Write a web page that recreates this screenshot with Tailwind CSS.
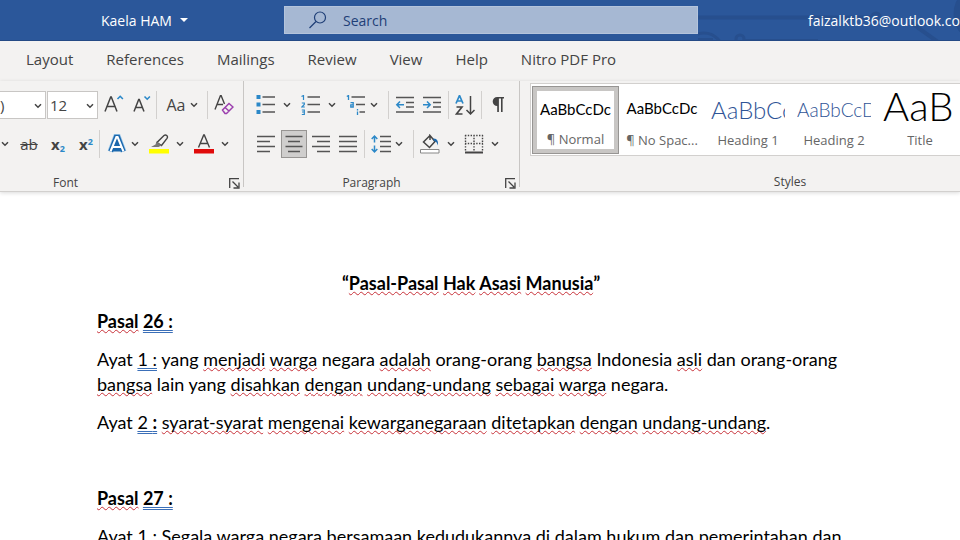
<!doctype html>
<html lang="en">
  <head>
    <meta charset="UTF-8" />
    <meta name="viewport" content="width=device-width, initial-scale=1.0" />
    <script src="https://cdn.jsdelivr.net/npm/@tailwindcss/browser@4"></script>
    <title>Kaela HAM - Word</title>
  </head>
  <body
    class="h-screen flex flex-col overflow-hidden bg-white font-['Open_Sans','Noto_Sans',sans-serif] text-[#444444]"
  >
    <!-- Shared icon parts -->
    <svg class="hidden">
      <symbol id="chevron" viewBox="0 0 8 6">
        <path d="M1 1.2 4 4.2 7 1.2" fill="none" stroke="#444" stroke-width="1.5" />
      </symbol>
      <symbol id="launcher" viewBox="0 0 11 11">
        <path d="M.7 10V.7H10M3.5 3.5l5.5 5.5M10 4.5V10H4.5" fill="none" stroke="#444" stroke-width="1.3" />
      </symbol>
    </svg>

    <!-- Title bar -->
    <header
      class="relative flex items-center shrink-0 h-[41px] bg-[#2b579a] border-b border-[#244a85] text-white text-[14px] whitespace-nowrap overflow-hidden"
    >
      <svg class="absolute right-0 top-0 w-[262px] h-[41px]" viewBox="0 0 262 41" fill="none" stroke="#274f8e">
        <path d="M0 17.5h174" stroke-width="4" />
        <circle cx="178" cy="17" r="4" stroke-width="3" />
        <path d="M212 22l28 20" stroke-width="4" />
        <circle cx="6" cy="52" r="19" stroke-width="3" />
        <path d="M-4 39.5h19" stroke-width="3" />
        <circle cx="42" cy="39" r="4" stroke-width="3" />
        <path d="M46 40h74" stroke-width="2" />
        <circle cx="286" cy="14" r="30" fill="#274f8e" />
      </svg>
      <div class="w-[284px] shrink-0 pl-[101px]">
        <button class="flex items-center gap-2">
          Kaela HAM
          <svg class="w-2 h-1" viewBox="0 0 8 4"><path d="M0 0h8L4 4z" fill="#fff" /></svg>
        </button>
      </div>
      <label
        class="relative flex-1 flex items-center h-7 pl-6 bg-[#a6b8d3] border border-[#b4c4dc]"
      >
        <svg class="w-[18px] h-[18px] shrink-0" viewBox="0 0 18 18" fill="none" stroke="#1f3f77" stroke-width="1.2">
          <circle cx="11" cy="6.5" r="5.5" />
          <path d="M7 10.5 .5 17" />
        </svg>
        <input
          type="text"
          aria-label="Search"
          placeholder="Search"
          class="flex-1 min-w-0 pl-4 bg-transparent outline-none placeholder:text-[#1f3f77]"
        />
      </label>
      <div class="relative w-[262px] shrink-0 pl-[110px]">faizalktb36@outlook.co</div>
    </header>

    <!-- Ribbon tabs -->
    <nav class="flex items-center shrink-0 gap-[33px] h-10 pl-[26px] pb-1 bg-[#f3f2f1] text-[15px] whitespace-nowrap">
      <a href="#">Layout</a>
      <a href="#">References</a>
      <a href="#">Mailings</a>
      <a href="#">Review</a>
      <a href="#">View</a>
      <a href="#">Help</a>
      <a href="#">Nitro PDF Pro</a>
    </nav>

    <!-- Ribbon -->
    <div class="flex shrink-0 h-[111px] bg-[#f3f2f1] border-b border-[#d2d0ce] text-[12px] shadow-[0_1px_4px_rgba(0,0,0,0.15)] overflow-hidden">
      <!-- Font -->
      <section class="relative flex flex-col w-[244px] shrink-0 pt-2.5">
        <div class="flex items-center h-7">
          <div class="relative w-[46px] h-7">
            <select aria-label="Font" class="appearance-none w-full h-full bg-white border border-l-0 border-[#c8c6c4] text-[15px]">
              <option>)</option>
            </select>
            <svg class="absolute right-1 top-3 w-2 h-1.5 pointer-events-none"><use href="#chevron" /></svg>
          </div>
          <div class="relative w-[51px] h-7 ml-px">
            <select aria-label="Font size" class="appearance-none w-full h-full pl-0.5 bg-white border border-[#c8c6c4] text-[15px]">
              <option>12</option>
            </select>
            <svg class="absolute right-1 top-3 w-2 h-1.5 pointer-events-none"><use href="#chevron" /></svg>
          </div>
          <button aria-label="Increase font size" class="flex justify-center w-8">
            <svg class="w-5 h-5" viewBox="0 0 20 20" fill="none" stroke="#444" stroke-width="1.5">
              <path d="M1 16.5 6.7 2h.6L13 16.5M3 11.5h8" />
              <path d="M13.5 4l2.700-2.700L18.900 4" stroke="#2b88c8" stroke-width="1.600" />
            </svg>
          </button>
          <button aria-label="Decrease font size" class="flex justify-center w-6">
            <svg class="w-5 h-5" viewBox="0 0 20 20" fill="none" stroke="#444" stroke-width="1.5">
              <path d="M2 16.500 6.700 4.500h.6L12 16.500M3.500 12.500h7" />
              <path d="M12.500 1.500l2.700 2.700L17.900 1.500" stroke="#2b88c8" stroke-width="1.600" />
            </svg>
          </button>
          <div class="w-px h-7 mx-0.5 bg-[#d2d0ce]"></div>
          <button class="flex items-center justify-center gap-1 w-[46px] text-[16px]">
            Aa <svg class="w-2 h-1.5"><use href="#chevron" /></svg>
          </button>
          <div class="w-px h-7 mx-0.5 bg-[#d2d0ce]"></div>
          <button aria-label="Clear formatting" class="flex justify-center w-7">
            <svg class="w-5 h-5" viewBox="0 0 20 20" fill="none" stroke="#444" stroke-width="1.4">
              <path d="M1 14.500 6.500 .5h.6L10.500 9M3 9.500h6" />
              <path d="M8.500 15 15 8.500l4 3.500-6.500 6.500H11zM11 12.500l4 3.500" stroke="#9b3fae" stroke-width="1.500" />
            </svg>
          </button>
        </div>

        <div class="flex items-center h-7 mt-[11px]">
          <button aria-label="Underline options" class="w-4 flex justify-start pl-px">
            <svg class="w-2 h-1.5"><use href="#chevron" /></svg>
          </button>
          <button class="w-[26px] text-[15px] line-through">ab</button>
          <button class="w-8 text-[15px] font-bold">x<sub class="text-[9px] text-[#2b88c8]">2</sub></button>
          <button class="w-6 text-[15px] font-bold">x<sup class="text-[9px] text-[#2b88c8]">2</sup></button>
          <div class="w-px h-7 mx-px bg-[#d2d0ce]"></div>
          <button aria-label="Text effects" class="flex items-center gap-1 w-[48px] pl-1.5">
            <svg class="w-5 h-5" viewBox="0 0 20 20" fill="none">
              <path d="M3.500 17.500 9 3h2l5.500 14.500M6 13h8" stroke="#9cc8ea" stroke-width="6" />
              <path d="M3.500 17.500 9 3h2l5.500 14.500M6 13h8" fill="#1b68ad" stroke="#1b68ad" stroke-width="4.500" />
              <path d="M3.500 17.500 9.400 3h1.200l5.900 14.500M6 13h8" stroke="#fff" stroke-width="2" />
            </svg>
            <svg class="w-2 h-1.5"><use href="#chevron" /></svg>
          </button>
          <button aria-label="Text highlight color" class="flex items-center gap-[7px] w-[45px]">
            <svg class="w-5 h-5" viewBox="0 0 20 20" fill="none">
              <path d="M15 1.500c1.800-1.500 4.500.6 3 2.800L12.500 11.500 8 8.500z" stroke="#444" stroke-width="1.400" />
              <path d="M7.500 7.500l5 4-3 1.500H2l4.500-2.500z" fill="#777" />
              <path d="M0 15h20v4.500H0z" fill="#ff0" />
            </svg>
            <svg class="w-2 h-1.5"><use href="#chevron" /></svg>
          </button>
          <button aria-label="Font color" class="flex items-center gap-[7px]">
            <svg class="w-5 h-5" viewBox="0 0 20 20" fill="none">
              <path d="M4.500 13.500 9.700 1h.6l5.200 12.500M6.300 9.500h7.400" stroke="#444" stroke-width="1.400" />
              <path d="M0 15h20v4.500H0z" fill="#e00b0b" />
            </svg>
            <svg class="w-2 h-1.5"><use href="#chevron" /></svg>
          </button>
        </div>

        <div class="flex items-center mt-4 h-5 pr-1">
          <span class="flex-1 text-center pr-[98px]">Font</span>
          <button aria-label="Font settings"><svg class="w-[11px] h-[11px]"><use href="#launcher" /></svg></button>
        </div>
        <div class="absolute right-0 top-0 w-px h-[106px] bg-[#c8c6c4]"></div>
      </section>

      <!-- Paragraph -->
      <section class="relative flex flex-col w-[276px] shrink-0 pt-2.5">
        <div class="flex items-center h-7 pl-3">
          <button aria-label="Bullets" class="flex items-center gap-[7px] w-[45px]">
            <svg class="w-5 h-5" viewBox="0 0 20 20">
              <path d="M.5 0h4v4h-4zM.5 7.500h4v4h-4zM.5 15h4v4h-4z" fill="#2b88c8" />
              <path d="M6.500 2H19M6.500 9.500H19M6.500 17H19" stroke="#555" stroke-width="1.500" />
            </svg>
            <svg class="w-2 h-1.5"><use href="#chevron" /></svg>
          </button>
          <button aria-label="Numbering" class="flex items-center gap-[7px] w-[45px]">
            <svg class="w-5 h-5" viewBox="0 0 20 20" fill="none">
              <path d="M.5 1.500 2.500.5V5M.8 8h2.500v1.500L.8 12h3M.8 15h2.500v4.500H.8M1 17h2" stroke="#2b88c8" stroke-width="1.200" />
              <path d="M6.500 2H19M6.500 9.500H19M6.500 17H19" stroke="#555" stroke-width="1.500" />
            </svg>
            <svg class="w-2 h-1.5"><use href="#chevron" /></svg>
          </button>
          <button aria-label="Multilevel list" class="flex items-center gap-1">
            <svg class="w-5 h-5" viewBox="0 0 20 20" fill="none">
              <path d="M.8 1.500 2.500.5V5M4.500 7.700h2.700V12H4.800V9.900h2.400M11.500 14v1.500M11.500 16.500V20" stroke="#2b88c8" stroke-width="1.300" />
              <path d="M5.500 2H19M10 9.500H19M13.500 17H19" stroke="#555" stroke-width="1.500" />
            </svg>
            <svg class="w-2 h-1.5"><use href="#chevron" /></svg>
          </button>
          <div class="w-px h-7 ml-2.5 mr-1.5 bg-[#d2d0ce]"></div>
          <button aria-label="Decrease indent" class="mr-[7px]">
            <svg class="w-5 h-5" viewBox="0 0 20 20" fill="none">
              <path d="M1 2.500h18M11 7.500h8M11 12h8M1 17h18" stroke="#555" stroke-width="1.500" />
              <path d="M9 9.800H2M5 6.500 1.800 9.800 5 13" stroke="#2b88c8" stroke-width="1.500" />
            </svg>
          </button>
          <button aria-label="Increase indent">
            <svg class="w-5 h-5" viewBox="0 0 20 20" fill="none">
              <path d="M1 2.500h18M11 7.500h8M11 12h8M1 17h18" stroke="#555" stroke-width="1.500" />
              <path d="M1 9.800h7M5 6.500 8.200 9.800 5 13" stroke="#2b88c8" stroke-width="1.500" />
            </svg>
          </button>
          <div class="w-px h-7 mx-1.5 bg-[#d2d0ce]"></div>
          <button aria-label="Sort">
            <svg class="w-5 h-5" viewBox="0 0 20 20" fill="none">
              <path d="M1 8.500 4.500.5 8 8.500M2.300 6h4.400" stroke="#2b88c8" stroke-width="1.700" />
              <path d="M1.500 12h5.500L1.500 19H7.500" stroke="#444" stroke-width="1.600" />
              <path d="M15.500 1v18M11.500 15l4 4 4-4" stroke="#444" stroke-width="1.500" />
            </svg>
          </button>
          <div class="w-px h-7 mx-1.5 bg-[#d2d0ce]"></div>
          <button aria-label="Show formatting marks" class="pl-1">
            <svg class="w-3 h-5" viewBox="0 0 12 20">
              <path d="M5.200 11A4.500 4.500 0 0 1 5.200 2H12v1.400H10.600V17H9V3.400H6.900V17H5.200z" fill="#444" />
            </svg>
          </button>
        </div>

        <div class="flex items-center h-7 mt-[11px] pl-3">
          <button aria-label="Align left">
            <svg class="w-5 h-5" viewBox="0 0 20 20" stroke="#555" stroke-width="1.500">
              <path d="M1 2.500h18M1 7.500h13M1 12.500h18M1 17.500h13" />
            </svg>
          </button>
          <button aria-label="Center" class="flex items-center justify-center w-[26px] h-7 ml-[5px] bg-[#cfcecd] border border-[#979593]">
            <svg class="w-5 h-5" viewBox="0 0 20 20" stroke="#555" stroke-width="1.500">
              <path d="M1.500 2.500h17M4 7.500h12M1.500 12.500h17M4 17.500h12" />
            </svg>
          </button>
          <button aria-label="Align right" class="ml-1">
            <svg class="w-5 h-5" viewBox="0 0 20 20" stroke="#555" stroke-width="1.500">
              <path d="M1 2.500h18M6 7.500h13M1 12.500h18M6 17.500h13" />
            </svg>
          </button>
          <button aria-label="Justify" class="ml-[7px]">
            <svg class="w-5 h-5" viewBox="0 0 20 20" stroke="#555" stroke-width="1.500">
              <path d="M1 2.500h18M1 7.500h18M1 12.500h18M1 17.500h18" />
            </svg>
          </button>
          <div class="w-px h-7 mx-1.5 bg-[#d2d0ce]"></div>
          <button aria-label="Line spacing" class="flex items-center gap-1">
            <svg class="w-5 h-5" viewBox="0 0 20 20" fill="none">
              <path d="M3.500 2.500v6M.7 5 3.500 2l2.800 3M3.500 11.500v6M.7 15l2.800 3 2.800-3" stroke="#2b88c8" stroke-width="1.500" />
              <path d="M9 2.500h11M9 7.500h11M9 12.500h11M9 17.500h11" stroke="#555" stroke-width="1.500" />
            </svg>
            <svg class="w-2 h-1.5"><use href="#chevron" /></svg>
          </button>
          <div class="w-px h-7 ml-2.5 mr-1.5 bg-[#d2d0ce]"></div>
          <button aria-label="Shading" class="flex items-center gap-[7px] w-11">
            <svg class="w-5 h-5" viewBox="0 0 20 20" fill="none">
              <path d="M10 1.500 3.500 8l6 5.500L15 7.500 10 1.500V6" stroke="#444" stroke-width="1.500" />
              <path d="M13 4.500c4-.5 5.500 2.500 5 7-1-2.500-1.500-4-4-4.500z" fill="#1b68ad" />
              <path d="M.5 15.500h18.500v3.500H.5z" fill="#fff" stroke="#888" />
            </svg>
            <svg class="w-2 h-1.5"><use href="#chevron" /></svg>
          </button>
          <button aria-label="Borders" class="flex items-center gap-[7px]">
            <svg class="w-5 h-5" viewBox="0 0 20 20" fill="none" stroke="#444">
              <path d="M1 1.500h18M1 9.500h18M1.500 1v16M10 1v16M18.500 1v16" stroke-width="1.400" stroke-dasharray="1.400 1.400" />
              <path d="M1 18.500h18" stroke-width="2" />
            </svg>
            <svg class="w-2 h-1.5"><use href="#chevron" /></svg>
          </button>
        </div>

        <div class="flex items-center mt-4 h-5 pr-1">
          <span class="flex-1 text-center pr-1.5">Paragraph</span>
          <button aria-label="Paragraph settings"><svg class="w-[11px] h-[11px]"><use href="#launcher" /></svg></button>
        </div>
        <div class="absolute right-0 top-0 w-px h-[106px] bg-[#c8c6c4]"></div>
      </section>

      <!-- Styles -->
      <section class="flex flex-col flex-1 min-w-[540px] pt-0.5 pl-2.5">
        <div class="flex items-center shrink-0 h-[73px] pl-px bg-white border border-[#d2d0ce] text-center text-[13px] text-[#666666] whitespace-nowrap">
          <button class="flex flex-col justify-between w-[87px] h-[68px] pt-2 pb-0.5 bg-white border border-[#979593] ring-4 ring-inset ring-[#c8c6c4]">
            <span class="mx-1 h-7 overflow-hidden font-[Lato,sans-serif] text-[15px] leading-7 text-black">AaBbCcDc</span>
            <span class="leading-6">¶ Normal</span>
          </button>
          <button class="flex flex-col justify-between w-[86px] h-[68px] pt-2 pb-0.5">
            <span class="mx-1 h-7 overflow-hidden font-[Lato,sans-serif] text-[15px] leading-7 text-black">AaBbCcDc</span>
            <span class="leading-6">¶ No Spac...</span>
          </button>
          <button class="flex flex-col justify-between w-[86px] h-[68px] pt-2 pb-0.5">
            <span class="mx-1.5 h-7 overflow-hidden text-left font-[Lato,sans-serif] font-light text-[24px] leading-8 text-[#2f5496]">AaBbCc</span>
            <span class="leading-6">Heading 1</span>
          </button>
          <button class="flex flex-col justify-between w-[86px] h-[68px] pt-2 pb-0.5">
            <span class="mx-1.5 h-7 overflow-hidden text-left font-[Lato,sans-serif] font-light text-[19px] leading-8 text-[#2f5496]">AaBbCcD</span>
            <span class="leading-6">Heading 2</span>
          </button>
          <button class="flex flex-col justify-between w-[86px] h-[68px] pt-1 pb-0.5">
            <span class="mx-1.5 h-9 overflow-hidden text-left font-[Lato,sans-serif] font-light text-[40px] leading-8 text-black">AaB</span>
            <span class="leading-6">Title</span>
          </button>
        </div>
        <div class="flex items-center justify-center shrink-0 mt-4 h-5 pr-2.5">Styles</div>
      </section>
    </div>

    <!-- Document -->
    <main class="flex-1 pt-[79px] pl-[97px] pr-[115px] font-[Lato,sans-serif] text-[18px] leading-[25px] text-black [&_p]:mb-[13px] [&_s]:underline [&_s]:decoration-wavy [&_s]:decoration-1 [&_s]:decoration-[#c8323a] [&_s]:underline-offset-1 [&_u]:decoration-double [&_u]:decoration-1 [&_u]:decoration-[#3b6fb8] [&_u]:underline-offset-2 [&_s]:[text-decoration-skip-ink:none]">
      <p class="text-center font-bold">“<s>Pasal-Pasal</s> <s>Hak</s> <s>Asasi</s> <s>Manusia</s>”</p>
      <p class="font-bold"><s>Pasal</s> <u>26 :</u></p>
      <p>
        Ayat <u>1 :</u> yang <s>menjadi</s> <s>warga</s> negara <s>adalah</s> orang-orang <s>bangsa</s> Indonesia <s>asli</s> dan orang-orang
        <s>bangsa</s> lain yang <s>disahkan</s> <s>dengan</s> <s>undang-undang</s> <s>sebagai</s> <s>warga</s> negara.
      </p>
      <p>
        Ayat <u>2 <b>:</b></u> <s>syarat-syarat</s> <s>mengenai</s> <s>kewarganegaraan</s> <s>ditetapkan</s> <s>dengan</s> <s>undang-undang</s>.
      </p>
      <p class="h-[25px]"></p>
      <p class="font-bold"><s>Pasal</s> <u>27 :</u></p>
      <p class="whitespace-nowrap">Ayat 1 : Segala warga negara bersamaan kedudukannya di dalam hukum dan pemerintahan dan</p>
    </main>
  </body>
</html>
